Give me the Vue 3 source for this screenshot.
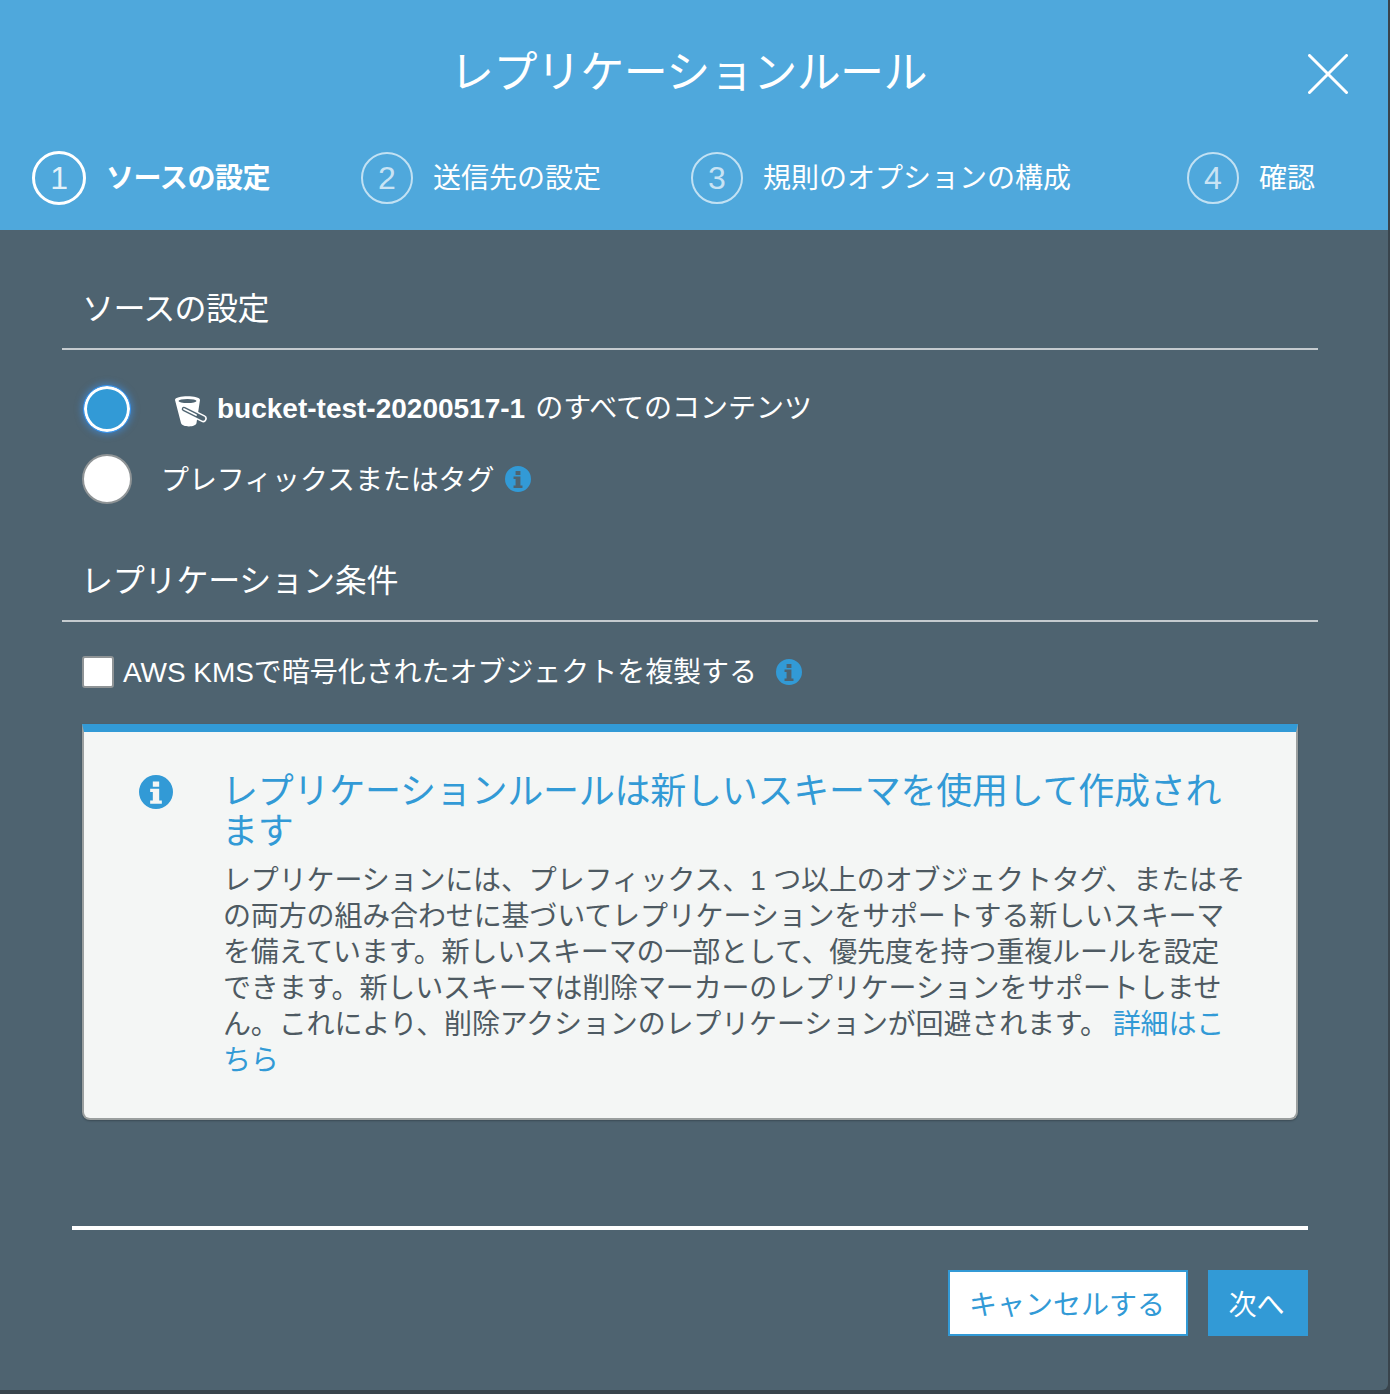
<script setup>
const steps = [
  { n: 1, label: "ソースの設定", active: true },
  { n: 2, label: "送信先の設定" },
  { n: 3, label: "規則のオプションの構成" },
  { n: 4, label: "確認" },
];
</script>

<template>
  <div class="dialog">
    <header class="head">
      <div class="title-row">
        <h1>レプリケーションルール</h1>
        <svg class="close" viewBox="0 0 40 40" width="40" height="40">
          <path d="M1.5 1.5L38.5 38.5M38.5 1.5L1.5 38.5" />
        </svg>
      </div>
      <ol class="steps">
        <li v-for="s in steps" :key="s.n" :class="['step', { active: s.active }]">
          <span class="num">{{ s.n }}</span>
          <span class="step-label">{{ s.label }}</span>
        </li>
      </ol>
    </header>

    <main class="body">
      <h2>ソースの設定</h2>
      <div class="radio-row first">
        <span class="radio checked"></span>
        <svg class="bucket" viewBox="0 0 33 31" width="33" height="31">
          <path class="bucket-body" d="M0 4C0 -1 25 -1 25 4L21.500 27C21 31.500 7 31.500 6 27Z" />
          <ellipse class="bucket-rim" cx="12.500" cy="5" rx="9" ry="2" />
          <path class="handle-outer" d="M9 13L28 22.500" />
          <path class="handle-dark" d="M9 13L28 22.500" />
          <path class="handle-inner" d="M9 13L21 19" />
        </svg>
        <span class="bucket-text"><b>bucket-test-20200517-1</b><span class="bucket-rest">のすべてのコンテンツ</span></span>
      </div>
      <div class="radio-row second">
        <span class="radio"></span>
        <span class="prefix">プレフィックスまたはタグ</span>
        <svg class="info small" viewBox="0 0 32 32">
          <path fill-rule="evenodd" d="M16 0a16 16 0 1 0 0 32a16 16 0 1 0 0-32zM13 6h6v5h-6zM10.500 13h8.500v11h2.500v3h-11v-3h2.500v-8h-2.500z" />
        </svg>
      </div>

      <h2 class="cond">レプリケーション条件</h2>
      <div class="check-row">
        <span class="check"></span>
        <span class="check-label">AWS KMSで暗号化されたオブジェクトを複製する</span>
        <svg class="info small kms" viewBox="0 0 32 32">
          <path fill-rule="evenodd" d="M16 0a16 16 0 1 0 0 32a16 16 0 1 0 0-32zM13 6h6v5h-6zM10.500 13h8.500v11h2.500v3h-11v-3h2.500v-8h-2.500z" />
        </svg>
      </div>

      <section class="notice">
        <svg class="info big" viewBox="0 0 32 32">
          <path fill-rule="evenodd" d="M16 0a16 16 0 1 0 0 32a16 16 0 1 0 0-32zM13 6h6v5h-6zM10.500 13h8.500v11h2.500v3h-11v-3h2.500v-8h-2.500z" />
        </svg>
        <div class="notice-text">
          <h3>レプリケーションルールは新しいスキーマを使用して作成されます</h3>
          <p>レプリケーションには、プレフィックス、1 つ以上のオブジェクトタグ、またはそ<br />の両方の組み合わせに基づいてレプリケーションをサポートする新しいスキーマ<br />を備えています。新しいスキーマの一部として、優先度を持つ重複ルールを設定<br />できます。新しいスキーマは削除マーカーのレプリケーションをサポートしませ<br />ん。これにより、削除アクションのレプリケーションが回避されます。<a>詳細はこ<br />ちら</a></p>
        </div>
      </section>

      <footer class="foot">
        <button class="btn cancel">キャンセルする</button>
        <button class="btn next">次へ</button>
      </footer>
    </main>
  </div>
</template>

<style>
body {
  background: #39444c;
}
</style>

<style scoped>
.dialog {
  width: 1388px;
  height: 1390px;
  background: #4e6370;
  border-bottom-right-radius: 6px;
  overflow: hidden;
  font-family: "Liberation Sans", "Noto Sans CJK JP", sans-serif;
  color: #fff;
}

.head {
  height: 230px;
  background: #4fa8dc;
}

.title-row {
  height: 150px;
  position: relative;
  display: flex;
  justify-content: center;
}

h1 {
  margin: 43px 0 0;
  padding-right: 11px;
  font-size: 44px;
  line-height: 60px;
  font-weight: 400;
  letter-spacing: -0.55px;
}

.close {
  position: absolute;
  left: 1308px;
  top: 54px;
}

.close path {
  stroke: #fff;
  stroke-width: 3px;
  stroke-linecap: round;
  fill: none;
}

.steps {
  list-style: none;
  margin: 0;
  padding: 0 0 0 32px;
  display: grid;
  grid-template-columns: 329px 330px 496px auto;
}

.step {
  display: flex;
  align-items: center;
  gap: 20px;
  height: 54px;
  margin-top: 1px;
  font-size: 28px;
}

.step-label {
  margin-bottom: 4px;
}

.num {
  width: 52px;
  height: 52px;
  box-sizing: border-box;
  border: 2px solid rgba(255, 255, 255, 0.65);
  border-radius: 50%;
  display: flex;
  align-items: center;
  justify-content: center;
  font-size: 32px;
  font-weight: 400;
  color: rgba(255, 255, 255, 0.7);
}

.step.active .num {
  width: 54px;
  height: 54px;
  border: 3px solid #fff;
  color: rgba(255, 255, 255, 0.85);
}

.step.active {
  gap: 20px;
  font-weight: 700;
  letter-spacing: -0.4px;
}

.body {
  padding: 52px 70px 0 62px;
}

h2 {
  margin: 0;
  padding: 3px 0 15px 20px;
  font-size: 32px;
  line-height: 48px;
  font-weight: 400;
  letter-spacing: -0.6px;
  border-bottom: 2px solid #c5cbcf;
}

h2.cond {
  margin-top: 51px;
  padding-left: 19px;
  letter-spacing: -0.2px;
}

.radio-row {
  display: flex;
  align-items: center;
  padding-left: 21px;
  font-size: 28px;
  height: 48px;
}

.radio-row.first {
  margin-top: 35px;
}

.radio-row.second {
  margin-top: 22px;
}

.radio {
  width: 50px;
  height: 50px;
  margin: -1px;
  box-sizing: border-box;
  border-radius: 50%;
  background: #fff;
  border: 2px solid #8f9496;
  flex: none;
}

.radio.checked {
  width: 48px;
  height: 48px;
  margin: 0;
  background: #329ad6;
  border: 1.500px solid #3b93ee;
  box-shadow: inset 0 0 0 3px #fff, 0 0 6px 2px rgba(59, 147, 238, 0.5);
}

.bucket {
  margin-left: 44px;
  margin-top: 4px;
  flex: none;
}

.bucket-body {
  fill: #fff;
}

.bucket-rim {
  fill: #4e6370;
}

.handle-outer {
  stroke: #fff;
  stroke-width: 7.500px;
  stroke-linecap: round;
}

.handle-dark {
  stroke: #4e6370;
  stroke-width: 4.500px;
  stroke-linecap: round;
}

.handle-inner {
  stroke: #fff;
  stroke-width: 1.800px;
  stroke-linecap: round;
}

.bucket-text {
  margin-left: 9px;
  position: relative;
  top: -3px;
}

.bucket-rest {
  margin-left: 10px;
}

.bucket-text b {
  font-weight: 700;
}

.prefix {
  margin-left: 30px;
  margin-bottom: 2px;
  letter-spacing: -0.1px;
}

.info {
  fill: #329ad6;
  flex: none;
}

.info.small {
  width: 26px;
  height: 26px;
  margin-left: 11px;
}

.info.kms {
  margin-left: 19px;
}

.info.big {
  width: 34px;
  height: 34px;
  margin: 43px 0 0 55px;
}

.check-row {
  display: flex;
  align-items: center;
  margin-top: 34px;
  padding-left: 21px;
  font-size: 28px;
  height: 32px;
}

.check-label {
  margin-bottom: 4px;
  letter-spacing: -0.05px;
}

.check {
  width: 32px;
  height: 32px;
  box-sizing: border-box;
  margin: 0 9px 0 -1px;
  background: #fff;
  border: 2px solid #8f9496;
  border-radius: 3px;
  flex: none;
}

.notice {
  display: flex;
  width: 1216px;
  height: 396px;
  box-sizing: border-box;
  margin: 36px 0 0 20px;
  background: #f4f6f5;
  border: 2px solid #9a9f9f;
  border-top: 8px solid #329ad6;
  border-radius: 0 0 8px 8px;
  box-shadow: 0 1px 2px rgba(0, 0, 0, 0.25);
}

.notice-text {
  margin-left: 49px;
  width: 1024px;
}

h3 {
  margin: 40px 0 0;
  font-size: 36px;
  line-height: 40px;
  font-weight: 400;
  letter-spacing: -0.25px;
  color: #329ad6;
}

p {
  margin: 11px 0 0 1px;
  font-size: 28px;
  line-height: 36px;
  letter-spacing: -0.15px;
  white-space: nowrap;
  color: #4e5a62;
}

a {
  margin-left: 5px;
  color: #329ad6;
}

.foot {
  margin: 106px -60px 0 10px;
  width: 1236px;
  box-sizing: border-box;
  border-top: 4px solid #fff;
  padding-top: 40px;
  display: flex;
  justify-content: flex-end;
  gap: 20px;
}

.btn {
  height: 66px;
  font-family: inherit;
  font-size: 28px;
  padding: 0;
  border-radius: 0;
}

.cancel {
  width: 240px;
  padding-right: 2px;
  background: #fff;
  border: 2px solid #329ad6;
  color: #329ad6;
}

.next {
  width: 100px;
  padding-right: 3px;
  background: #329ad6;
  border: none;
  color: #fff;
}
</style>
